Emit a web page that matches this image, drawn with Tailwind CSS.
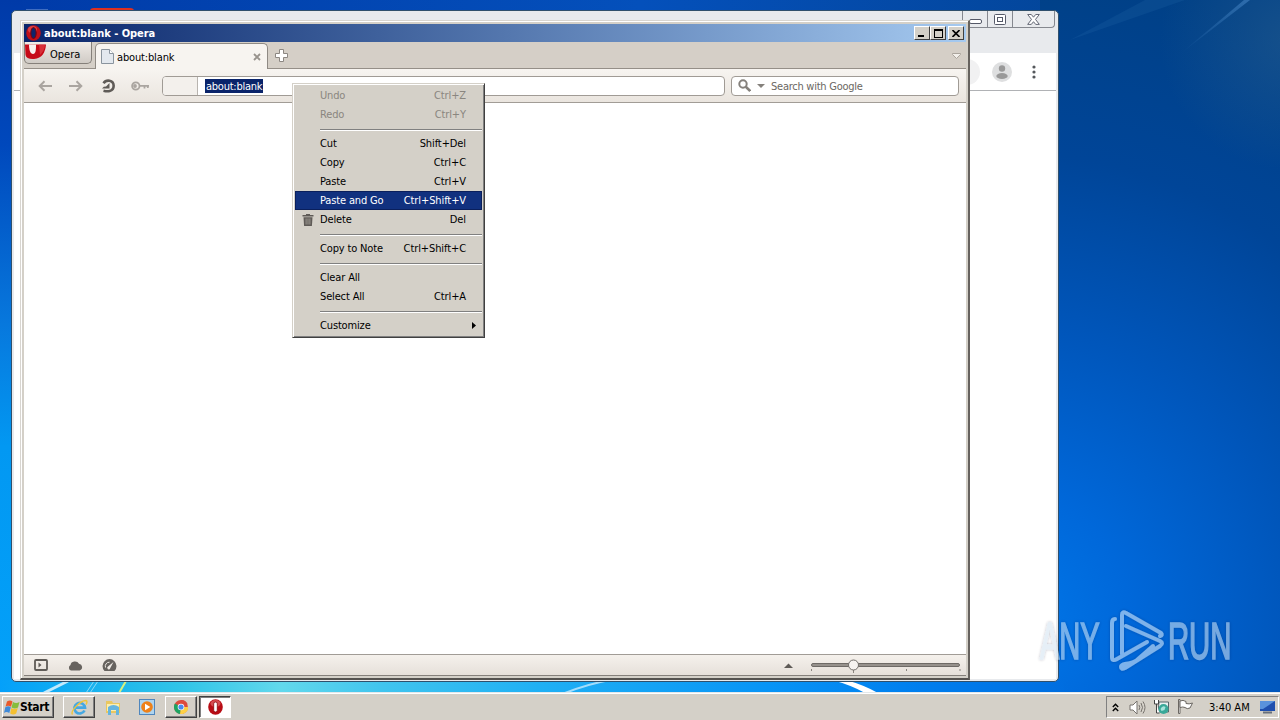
<!DOCTYPE html>
<html lang="en">
<head>
  <meta charset="UTF-8" />
  <title>about:blank - Opera</title>
  <script src="https://cdn.jsdelivr.net/npm/@tailwindcss/browser@4"></script>
  <style>
    body {
      font-family: 'DejaVu Sans Condensed', 'DejaVu Sans', sans-serif;
      font-stretch: condensed;
    }
  </style>
</head>
<body class="relative w-[1280px] h-[720px] overflow-hidden bg-[#0059c0] text-[11px] text-black whitespace-nowrap tracking-[-0.25px]">

  <!-- Wallpaper -->
  <svg class="absolute inset-0" width="1280" height="720" viewBox="0 0 1280 720">
    <defs>
      <linearGradient id="left" x1="0" y1="0" x2="0" y2="1">
        <stop offset="0" stop-color="#003aa8" />
        <stop offset=".2" stop-color="#0048bc" />
        <stop offset=".45" stop-color="#0778dd" />
        <stop offset=".62" stop-color="#0298f2" />
        <stop offset="1" stop-color="#03a2fa" />
      </linearGradient>
      <linearGradient id="top" x1="0" x2="1" y1="0" y2="0">
        <stop offset="0" stop-color="#003aa8" />
        <stop offset=".5" stop-color="#0450bb" />
        <stop offset="1" stop-color="#03418a" />
      </linearGradient>
      <radialGradient id="right" gradientUnits="userSpaceOnUse" cx="1000" cy="620" r="650">
        <stop offset="0" stop-color="#0078ea" />
        <stop offset=".2" stop-color="#0068da" />
        <stop offset=".45" stop-color="#0056bb" />
        <stop offset=".72" stop-color="#004598" />
        <stop offset="1" stop-color="#004086" />
      </radialGradient>
      <radialGradient id="corner" gradientUnits="userSpaceOnUse" cx="1290" cy="40" r="130">
        <stop offset="0" stop-color="#2a6090" stop-opacity=".5" />
        <stop offset="1" stop-color="#2a6090" stop-opacity="0" />
      </radialGradient>
      <linearGradient id="bottom" gradientUnits="userSpaceOnUse" x1="0" x2="1280" y1="0" y2="0">
        <stop offset="0" stop-color="#04a0fa" />
        <stop offset=".06" stop-color="#14aff0" />
        <stop offset=".14" stop-color="#30c4e8" />
        <stop offset=".22" stop-color="#62d8ec" />
        <stop offset=".3" stop-color="#40c4ee" />
        <stop offset=".42" stop-color="#20b0f4" />
        <stop offset=".6" stop-color="#0894f6" />
        <stop offset=".72" stop-color="#007eee" />
        <stop offset=".82" stop-color="#0070e2" />
        <stop offset=".84" stop-color="#006cde" stop-opacity="0" />
      </linearGradient>
      <linearGradient id="ray" x1="0" x2="1" y1="1" y2="0">
        <stop offset="0" stop-color="#5090d0" stop-opacity="0" />
        <stop offset="1" stop-color="#5090d0" stop-opacity=".5" />
      </linearGradient>
    </defs>
    <rect width="1280" height="20" fill="url(#top)" />
    <rect y="0" width="22" height="720" fill="url(#left)" />
    <rect x="1040" width="240" height="720" fill="url(#right)" />
    <rect x="1050" width="230" height="300" fill="url(#corner)" />
    <path d="M1180 54L1244 0h6z" fill="url(#ray)" />
    <path d="M1070 40L1145 0h40z" fill="#2a6cb0" opacity=".2" />
    <rect y="680" width="1280" height="14" fill="url(#bottom)" />
    <g fill="none" stroke="#fff">
      <path d="M44 693L68 681" stroke-width="3" opacity=".75" />
      <path d="M86 693L94 681M90 693L98 681" opacity=".5" />
      <path d="M119 693L126 681" stroke="#d8f080" stroke-width="2" />
      <path d="M565 693Q588 684 610 680" stroke-width="2" opacity=".6" />
    </g>
    <path d="M832 680h14q18 5 32 13h-13q-14-8-33-13z" fill="#fff" />
    <path d="M90 11q0-3 4-3h36q4 0 4 3z" fill="#e03020" />
    <path d="M26 10h22" stroke="#80a0d8" />
  </svg>

  <!-- Browser window in the background -->
  <div class="absolute left-[11px] top-[10px] w-[1048px] h-[672px] rounded-[5px] border border-[#30506c] bg-[#e8eaed] overflow-hidden flex flex-col">
    <div class="h-[42px] shrink-0 flex justify-end items-start pr-[3px]">
      <div class="flex h-[17px] w-[93px] border border-t-0 border-[#85888f] rounded-b-[4px]">
        <div class="w-[25px] border-r border-[#85888f] flex justify-center pt-[8px]">
          <div class="w-[13px] h-[5px] border border-[#555968] rounded-[2px] bg-white"></div>
        </div>
        <div class="w-[25px] border-r border-[#85888f] flex justify-center pt-[3px]">
          <svg width="12" height="11" viewBox="0 0 12 11" fill="#fff" stroke="#555968"><rect x=".5" y=".5" width="11" height="10" rx="1" /><rect x="3.500" y="3.500" width="5" height="4" /></svg>
        </div>
        <div class="flex-1 flex justify-center pt-[3px]">
          <svg width="13" height="11" viewBox="0 0 13 11" fill="#fff" stroke="#555968" stroke-width=".9"><path d="M.7.5h3.600l2.200 2.700L8.700.5h3.600L8.500 5.400l3.800 5H8.700L6.500 7.700 4.300 10.400H.7l3.800-5z" /></svg>
        </div>
      </div>
    </div>
    <div class="h-[38px] shrink-0 mr-[2px] ml-[2px] bg-white border-b border-[#b0b2b5] flex justify-end items-center pr-[20px]">
      <div class="w-[26px] h-[26px] rounded-full bg-[#f1f1f2] mr-[12px]"></div>
      <svg class="mr-[20px]" width="20" height="20" viewBox="0 0 20 20"><circle cx="10" cy="10" r="10" fill="#dedfe0" /><circle cx="10" cy="6.500" r="3.200" fill="#999" /><ellipse cx="10" cy="14" rx="5.700" ry="3" fill="#999" /></svg>
      <svg width="4" height="14" viewBox="0 0 4 14" fill="#55585c"><circle cx="2" cy="2" r="1.600" /><circle cx="2" cy="7" r="1.600" /><circle cx="2" cy="12" r="1.600" /></svg>
    </div>
    <div class="flex-1 mx-[2px] mb-[2px] bg-white"></div>
  </div>

  <!-- Opera window -->
  <div class="absolute left-[20px] top-[20px] w-[950px] h-[660px] border-t border-l border-[#d8d5d0] border-r-2 border-b-2 border-r-[#66625e] border-b-[#55524f] bg-[#d4d0c8] flex flex-col pl-[3px] pt-[3px] pr-[2px] pb-[2px] shadow-[inset_1px_1px_0_#fff]">

    <!-- Title bar -->
    <div class="h-[18px] shrink-0 bg-linear-to-r from-[#0a246a] to-[#a6caf0] flex items-center pl-[2px] pr-[2px] text-white">
      <svg width="15" height="16" viewBox="0 0 15 16"><ellipse cx="7.500" cy="8" rx="7.300" ry="7.800" fill="#c01018" /><ellipse cx="6.500" cy="4.500" rx="4.500" ry="3.500" fill="#f06060" opacity=".6" /><ellipse cx="7.500" cy="8" rx="2.700" ry="5.500" fill="#10246a" stroke="#7c0008" /></svg>
      <span class="ml-[3px] pt-[2px] font-bold text-[11px] tracking-[-0.03px]">about:blank - Opera</span>
      <div class="ml-auto flex text-black">
        <div class="w-4 h-[14px] bg-[#d4d0c8] border border-white border-r-[#404040] border-b-[#404040] flex items-end pl-[3px] pb-[2px]"><div class="w-[6px] h-[2px] bg-black"></div></div>
        <div class="w-4 h-[14px] bg-[#d4d0c8] border border-white border-r-[#404040] border-b-[#404040] flex justify-center items-center"><div class="w-[9px] h-[9px] border border-t-2 border-black"></div></div>
        <div class="ml-[2px] w-4 h-[14px] bg-[#d4d0c8] border border-white border-r-[#404040] border-b-[#404040] flex justify-center items-center"><svg width="8" height="7" viewBox="0 0 8 7"><path d="M.5 0l7 7M7.500 0l-7 7" stroke="#000" stroke-width="1.600" /></svg></div>
      </div>
    </div>

    <!-- Tab bar -->
    <div class="h-[27px] shrink-0 relative flex bg-[#d5cfc7] shadow-[inset_0_-1px_0_#958f88]">
      <div class="w-[68px] h-[22px] border border-t-0 border-[#85807a] rounded-b-[5px] bg-linear-to-b from-[#efebe7] to-[#d0cbc5] flex">
        <svg class="mt-[2px]" width="22" height="17" viewBox="0 0 22 17"><path d="M0 .5h21C20.500 8 17 14.500 9 15c-5 .3-8-1-8.500-4z" fill="#c60a18" /><path d="M4 .5h7c0 6-.3 9.500-3 9.500S4 6 4 .5z" fill="#f7f0ee" /><path d="M14 .5h6c0 4-2 8-5 10.500z" fill="#e24850" opacity=".6" /></svg>
        <span class="ml-[3px] mt-[5px] leading-[16px] tracking-[0px]">Opera</span>
      </div>
      <div class="ml-[3px] mt-[1px] w-[173px] h-[26px] border border-b-0 border-[#8f8a84] rounded-t-[5px] bg-[#f7f4f0] flex items-center pl-[5px] pr-[6px]">
        <svg width="13" height="15" viewBox="0 0 13 15"><path d="M.5.5h8l4 4v10H.5z" fill="#e3e8ee" stroke="#8a949e" /><path d="M8.500.5v4h4" fill="#fff" stroke="#8a949e" /></svg>
        <span class="ml-[3px] mt-[3px] tracking-[-0.15px]">about:blank</span>
        <svg class="ml-auto" width="8" height="8" viewBox="0 0 8 8"><path d="M1 1l6 6M7 1l-6 6" stroke="#98938d" stroke-width="1.800" /></svg>
      </div>
      <svg class="ml-[7px] mt-[7px]" width="13" height="13" viewBox="0 0 13 13"><path d="M4.500.5h4v4h4v4h-4v4h-4v-4h-4v-4h4z" fill="#fff" stroke="#8c8782" /></svg>
      <svg class="ml-auto mr-[5px] mt-[11px]" width="9" height="6" viewBox="0 0 9 6"><path d="M.5.5h8v1l-4 4-4-4z" fill="#f2efea" stroke="#aaa49c" /></svg>
    </div>

    <!-- Address bar -->
    <div class="h-[34px] shrink-0 bg-linear-to-b from-[#f7f4f0] to-[#eae5df] border-b border-[#a19c96] flex items-center pl-[14px] pr-[7px]">
      <svg width="14" height="12" viewBox="0 0 14 12" fill="none" stroke="#aaa5a0" stroke-width="2"><path d="M14 6H2M6.500 1.300L1.700 6l4.800 4.700" /></svg>
      <svg class="ml-[17px]" width="14" height="12" viewBox="0 0 14 12" fill="none" stroke="#aaa5a0" stroke-width="2"><path d="M0 6h12M7.500 1.300L12.300 6l-4.800 4.700" /></svg>
      <svg class="ml-[18px]" width="15" height="14" viewBox="0 0 15 14" fill="none" stroke="#5f5b57" stroke-width="2.600"><path d="M2.500 4.200C4 1.900 6.500 1.400 8.500 1.700c5.500 1 5.500 9 .2 10.300-1.700.4-4.200.2-6.200-.3" /><path d="M1 9.500h7.500V4L6.500 6 5 7.500 2.800 7.700z" fill="#5f5b57" stroke="none" /></svg>
      <svg class="ml-[15px]" width="19" height="10" viewBox="0 0 19 10" fill="none" stroke="#aaa5a0" stroke-width="1.800"><circle cx="4.800" cy="5" r="3.700" /><circle cx="4" cy="5" r="1" /><path d="M8.500 4.800H18M13.500 5v2.500M16.800 5v2" /></svg>
      <div class="ml-[12px] w-[563px] h-5 border border-[#a09b95] rounded-[4px] bg-white flex overflow-hidden">
        <div class="w-[35px] bg-[#f3f0ec] border-r border-[#b8b4af]"></div>
        <div class="flex items-center pl-[7px]"><span class="bg-[#0a246a] text-white leading-[15px] h-[14px] px-px">about:blank</span></div>
      </div>
      <div class="ml-[6px] w-[228px] h-5 border border-[#a09b95] rounded-[4px] bg-white flex items-center pl-[6px] text-[#6b6762]">
        <svg width="13" height="13" viewBox="0 0 13 13" fill="none" stroke="#85817c"><circle cx="5" cy="5" r="3.700" stroke-width="2" /><path d="M7.800 7.800l4.400 4.200" stroke-width="2.600" /></svg>
        <svg class="ml-[6px]" width="8" height="4" viewBox="0 0 8 4"><path d="M0 0h8L4 4z" fill="#85817c" /></svg>
        <span class="ml-[6px] pt-[3px]">Search with Google</span>
      </div>
    </div>

    <!-- Page -->
    <div class="flex-1 bg-white"></div>

    <!-- Status bar -->
    <div class="h-[22px] shrink-0 border-t border-b border-t-[#a19c96] border-b-[#85807b] bg-linear-to-b from-[#f5f1ec] to-[#e6e0da] flex items-center pl-[10px] pr-[5px]">
      <svg width="14" height="12" viewBox="0 0 14 12"><rect x="1" y="1" width="12" height="10" rx="1" fill="none" stroke="#5f5b57" stroke-width="1.800" /><path d="M4.500 3.500v5L7.500 6z" fill="#5f5b57" /></svg>
      <svg class="ml-[20px]" width="15" height="11" viewBox="0 0 15 11" fill="#67635f"><path d="M3 10.500a3 3 0 0 1-.5-5.500A4.500 4 0 0 1 11 3.700 3.500 3.500 0 0 1 11.700 10.500z" /></svg>
      <svg class="ml-[19px]" width="15" height="12" viewBox="0 0 15 12"><path d="M2.500 12A7 7 0 1 1 12.500 12z" fill="#67635f" /><path d="M3.500 8.500A4 4 0 0 1 7.500 3.200" stroke="#eee9e4" fill="none" /><path d="M11.500 3L6 7.500a1.500 1.500 0 1 0 2.200 1.800z" fill="#eee9e4" /></svg>
      <svg class="ml-auto mr-[17px]" width="9" height="5" viewBox="0 0 9 5"><path d="M0 5l4.500-4.500L9 5z" fill="#5f5b57" /></svg>
      <svg width="151" height="16" viewBox="0 0 151 16"><rect x="1.500" y="6.500" width="148" height="3" rx="1.500" fill="#96918c" stroke="#6e6a66" /><path d="M1.500 12v2M96.500 12v2M150 12v2M43.500 13v3" stroke="#8a8580" /><circle cx="43.500" cy="8" r="5" fill="#f6f3f0" stroke="#736f6b" /></svg>
    </div>
  </div>

  <!-- Context menu -->
  <div id="context-menu" class="absolute left-[292px] top-[83px] w-[193px] h-[255px] bg-[#d4d0c8] border border-[#d4d0c8] border-r-[#404040] border-b-[#404040] shadow-[inset_1px_1px_0_#fff,inset_-1px_-1px_0_#808080] p-[2px]"></div>

  <!-- Watermark -->
  <svg class="absolute left-[1034px] top-[606px]" width="206" height="70" viewBox="-4 -2 206 70">
    <defs>
      <filter id="glow" x="-10%" y="-10%" width="120%" height="120%"><feDropShadow dx="0" dy="0" stdDeviation="1.800" flood-color="#001030" flood-opacity=".45" /></filter>
    </defs>
    <g opacity=".56" filter="url(#glow)">
      <g fill="#d4e4f2" stroke="#d4e4f2" stroke-width="1.600" font-family="'Liberation Sans', sans-serif" font-size="52">
        <text transform="translate(2 51) scale(.56 1)">ANY</text>
        <text transform="translate(130 51) scale(.565 1)">RUN</text>
      </g>
      <g fill="none" stroke="#e0eefa" stroke-width="4" stroke-linejoin="round" stroke-linecap="round">
        <path d="M84 46V7q0-4 4-2l35 20q2 2-1 3" />
        <path d="M77 11q-3 0-3 4v34q0 5 5 2l30-17" />
        <path d="M88 18l34 15q4 2 0 5L87 60q-4 2-4-1 0-2 4-3 8-1 12-4l16-14" />
      </g>
    </g>
  </svg>

  <!-- Taskbar -->
  <div class="absolute left-0 bottom-0 w-full h-[28px] bg-[#d4d0c8] border-t border-[#e4e8ea] shadow-[inset_0_1px_0_#fff] flex items-end pb-[2px] pl-[2px]">
    <div class="w-[52px] h-[22px] border border-white border-r-[#404040] border-b-[#404040] shadow-[inset_-1px_-1px_0_#808080] flex items-center pl-[1px]">
      <svg width="16" height="15" viewBox="0 0 16 15"><path d="M3 1.500q3-2 5.500 0L7 6.700q-3-2-5.500 0z" fill="#e8592a" /><path d="M9 2q3 2 6.500 0L14 7.500q-3 2-6.500 0z" fill="#86bd3c" /><path d="M1.300 7.300q3-2 5.500 0L5.300 13q-3-2-5.300 0z" fill="#3f8ad8" /><path d="M7.300 8q3 2 6.500 0L12.200 13.500q-3 2-6 0z" fill="#f5c030" /></svg>
      <span class="text-[12px] font-bold tracking-[-0.3px]">Start</span>
    </div>
    <div class="ml-[9px] w-[32px] h-[22px] border border-white border-r-[#404040] border-b-[#404040] shadow-[inset_-1px_-1px_0_#808080] flex items-center justify-center">
      <svg width="17" height="17" viewBox="0 0 17 17" fill="none"><path d="M13.500 11.500A5.300 5.300 0 1 1 14 8.700H5" stroke="#45a8e2" stroke-width="2.700" /><path d="M1.500 15.500C-1 12.500 9 1.500 15 1.500c1.500.5 1 2.500 0 4" stroke="#f0c437" stroke-width="1.400" /></svg>
    </div>
    <svg class="ml-[10px] mb-[2px]" width="17" height="17" viewBox="0 0 17 17"><path d="M1 2h6l1 2h7v10H1z" fill="#e9c760" /><path d="M2 5h12v7H2z" fill="#fbeeb0" /><path d="M3 8q5.500-4 11 0v8h-3v-5H6v5H3z" fill="#65b5df" /></svg>
    <div class="ml-[17px] mb-[3px] w-[16px] h-[16px] border border-[#4f86bd] bg-[#aed4ef] flex items-center justify-center">
      <svg width="12" height="12" viewBox="0 0 12 12"><circle cx="6" cy="6" r="5.800" fill="#ee8119" /><path d="M4 2.800v6.400L9.300 6z" fill="#fff" /></svg>
    </div>
    <div class="ml-[10px] w-[32px] h-[22px] border border-white border-r-[#404040] border-b-[#404040] shadow-[inset_-1px_-1px_0_#808080] flex items-center justify-center">
      <svg width="14" height="14" viewBox="0 0 14 14"><circle cx="7" cy="7" r="7" fill="#dd4b3e" /><path d="M7 7L.9 3.500A7 7 0 0 0 6.500 14z" fill="#1da462" /><path d="M7 7h6.800V4.500A7 7 0 0 1 6 14z" fill="#fdd045" /><path d="M7 0a7 7 0 0 1 6.500 4H7z" fill="#dd4b3e" /><circle cx="7" cy="7" r="3.300" fill="#fff" /><circle cx="7" cy="7" r="2.600" fill="#4a8af0" /></svg>
    </div>
    <div class="ml-[2px] w-[32px] h-[22px] bg-white border border-[#404040] border-r-white border-b-white shadow-[inset_1px_1px_0_#808080] flex items-center justify-center">
      <svg width="15" height="16" viewBox="0 0 15 16"><ellipse cx="7.500" cy="8" rx="7.300" ry="7.700" fill="#b80c14" /><ellipse cx="7.500" cy="4.500" rx="5" ry="3.500" fill="#e87878" opacity=".6" /><rect x="5.700" y="3" width="3.600" height="10" rx="1.800" fill="#fff" stroke="#8a0008" stroke-width=".8" /></svg>
    </div>
    <!-- Tray -->
    <div class="ml-auto mr-[1px] w-[173px] h-[22px] border border-[#808080] border-r-white border-b-white flex items-center pl-[5px]">
      <svg width="7" height="9" viewBox="0 0 7 9" fill="none" stroke="#000" stroke-width="1.400"><path d="M.8 4l2.700-2.700L6.200 4M.8 8l2.700-2.700L6.200 8" /></svg>
      <svg class="ml-[10px]" width="17" height="15" viewBox="0 0 17 15" fill="none" stroke="#77736e"><path d="M1 5h3l4-4v13l-4-4H1z" fill="#fff" /><path d="M10 5q1.500 2.500 0 5M12 3q3 4.500 0 9M14 1.500q4 6 0 12" /></svg>
      <svg class="ml-[7px]" width="17" height="16" viewBox="0 0 17 16"><path d="M6 3h9.500v10H5z" fill="#e8f0f0" stroke="#59666a" /><path d="M1.500 1v4h4V1M3.500 5v9h3" fill="#fff" stroke="#444" /><circle cx="10.500" cy="10" r="5" fill="#39a898" /><path d="M7.500 10q2-4 5-2l-1 3-3 1z" fill="#a8e4dc" /></svg>
      <svg class="ml-[7px]" width="17" height="16" viewBox="0 0 17 16" fill="#fff" stroke="#6b6762"><path d="M1.500.5h1.500v14H1.500z" /><path d="M3 2q3-1.500 6 .5v2q3 1 6.500-.5L13 9q-3 1.500-5-.5-2-1-5 0z" /></svg>
      <span class="ml-[15px] pt-[2px] w-[42px] tracking-[0px]">3:40 AM</span>
      <svg class="ml-[9px]" width="16" height="13" viewBox="0 0 16 13"><path d="M0 0h15v10H0z" fill="#1f4fae" /><path d="M0 0h15L3 8H0z" fill="#5a92dc" /><path d="M3 11.500h9" stroke="#68707c" stroke-width="2" /></svg>
    </div>
  </div>

  <script>
    const items = [
      { label: "Undo", keys: "Ctrl+Z", disabled: true },
      { label: "Redo", keys: "Ctrl+Y", disabled: true },
      null,
      { label: "Cut", keys: "Shift+Del" },
      { label: "Copy", keys: "Ctrl+C" },
      { label: "Paste", keys: "Ctrl+V" },
      { label: "Paste and Go", keys: "Ctrl+Shift+V", active: true },
      { label: "Delete", keys: "Del", icon: true },
      null,
      { label: "Copy to Note", keys: "Ctrl+Shift+C" },
      null,
      { label: "Clear All", keys: "" },
      { label: "Select All", keys: "Ctrl+A" },
      null,
      { label: "Customize", keys: "", submenu: true }
    ];

    const trash = '<svg width="12" height="12" viewBox="0 0 12 12"><path d="M.5 1H4V0h4v1h3.500v1.600H.5z" fill="#5f5b57"/><path d="M1.500 3.300h9L9.900 12H2.100z" fill="#5f5b57"/><path d="M4.100 4.500v6M6 4.500v6M7.900 4.500v6" stroke="#aaa69f" stroke-width=".8"/></svg>';
    const arrow = '<svg class="ml-auto mr-[6px] mb-px" width="4" height="7" viewBox="0 0 4 7"><path d="M0 0l4 3.500L0 7z"/></svg>';

    document.getElementById("context-menu").innerHTML = items.map(item => {
      if (!item) {
        return '<div class="h-[10px] pt-[5px] ml-[25px]"><div class="h-[2px] border-t border-t-[#808080] bg-white"></div></div>';
      }
      let color = "";
      if (item.disabled) color = "text-[#8a867f]";
      if (item.active) color = "bg-[#11317f] text-white outline outline-offset-[-1px] outline-[#0a1f5c]";
      return '<div class="h-[19px] flex items-center ' + color + '">' +
        '<span class="w-[25px] pl-[7px]">' + (item.icon ? trash : "") + '</span>' +
        '<span class="pt-[2px] tracking-[-0.15px]">' + item.label + '</span>' +
        (item.submenu ? arrow : '<span class="ml-auto mr-[16px] pt-[2px] tracking-[-0.1px]">' + item.keys + '</span>') +
        '</div>';
    }).join("");
  </script>
</body>
</html>
